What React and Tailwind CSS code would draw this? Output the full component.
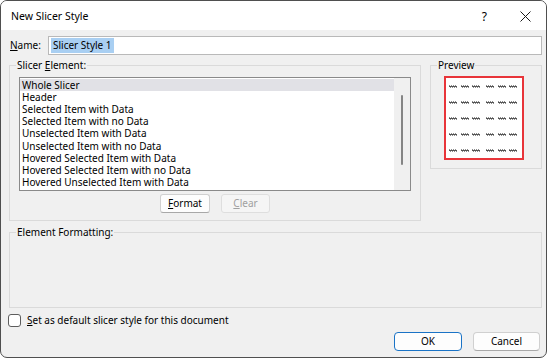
import React from "react";

const items = [
  "Whole Slicer",
  "Header",
  "Selected Item with Data",
  "Selected Item with no Data",
  "Unselected Item with Data",
  "Unselected Item with no Data",
  "Hovered Selected Item with Data",
  "Hovered Selected Item with no Data",
  "Hovered Unselected Item with Data",
];

const Dash = () => (
  <svg width="8" height="3" viewBox="0 0 8 3">
    <path d="M0 0.5 H1 M2 0.5 H3 M4 0.5 H5 M6 0.5 H7" stroke="#8c8c8c" strokeWidth="1" />
    <rect x="0" y="1" width="8" height="1" fill="#555555" />
    <path d="M1 2.5 H2 M3 2.5 H4 M5 2.5 H6 M7 2.5 H8" stroke="#8c8c8c" strokeWidth="1" />
  </svg>
);

const PreviewRow = () => (
  <div className="flex items-center h-[3px]">
    <Dash />
    <span className="w-[4px]" />
    <Dash />
    <span className="w-[3px]" />
    <Dash />
    <span className="w-[6px]" />
    <Dash />
    <span className="w-[4px]" />
    <Dash />
    <span className="w-[3px]" />
    <Dash />
  </div>
);

const App = () => {
  return (
    <div
      className="w-[550px] h-[360px] bg-white text-[10px] text-black"
      style={{ fontFamily: '"Noto Sans", "Liberation Sans", sans-serif' }}
    >
      <div className="w-[547px] h-[358px] border border-[#4f4f4f] rounded-[7px] overflow-hidden bg-[#f0f0f0] flex flex-col">
        {/* Title bar */}
        <div className="h-[29px] bg-white flex items-center pl-[10px] shrink-0">
          <span className="text-[10.5px] pt-[2px]">New Slicer Style</span>
          <span className="ml-auto text-[12px] pt-[2px] mr-[33px]">?</span>
          <svg width="11" height="11" viewBox="0 0 11 11" className="mr-[15px] mt-[2px]">
            <path d="M0.5 0.5 L10.5 10.5 M10.5 0.5 L0.5 10.5" stroke="#1a1a1a" strokeWidth="1" />
          </svg>
        </div>

        {/* Body */}
        <div className="flex-1 pl-[8px] pr-[4px] flex flex-col">
          {/* Name row */}
          <div className="flex items-center mt-[6px] h-[19px]">
            <span className="w-[39px] pl-[1px]">
              <span className="underline">N</span>ame:
            </span>
            <div className="flex-1 h-[19px] bg-white border border-[#b9b9b9] flex items-center pl-[2px]">
              <span className="bg-[#a9cff2] px-[2px] leading-[15px]">Slicer Style 1</span>
            </div>
          </div>

          {/* Slicer element + preview */}
          <div className="flex mt-[3px]">
            <fieldset className="w-[412px] h-[163px] border border-[#dadada]">
              <legend className="ml-[6px] px-[1px] leading-[14px]">
                Slicer <span className="underline">E</span>lement:
              </legend>
              <div className="px-[9px]">
                <div className="mt-[5px] h-[114px] w-[392px] bg-white border border-[#8a8a8a] flex">
                  <div className="flex-1 pt-[1px]">
                    {items.map((it, i) => (
                      <div
                        key={it}
                        className={`h-[12.2px] pl-[2px] whitespace-nowrap flex items-center ${
                          i === 0 ? "bg-[#e1e1e6]" : ""
                        }`}
                      >
                        <span className="leading-[11px]">{it}</span>
                      </div>
                    ))}
                  </div>
                  <div className="w-[16px] bg-[#f0f0f0] flex justify-center pt-[17px]">
                    <div className="w-[2px] h-[70px] bg-[#858585] rounded-full" />
                  </div>
                </div>
                <div className="flex justify-center gap-[11px] mt-[3px]">
                  <button className="w-[50px] h-[19px] bg-[#fdfdfd] border border-[#d0d0d0] border-b-[#a8a8a8] rounded-[3px] leading-[17px]">
                    <span className="underline">F</span>ormat
                  </button>
                  <button className="w-[49px] h-[19px] bg-[#f5f5f5] border border-[#dedede] rounded-[3px] leading-[17px] text-[#a0a0a0]">
                    <span className="underline">C</span>lear
                  </button>
                </div>
              </div>
            </fieldset>

            <fieldset className="ml-[9px] w-[112px] h-[111px] border border-[#dadada]">
              <legend className="ml-[6px] px-[1px] leading-[14px]">Preview</legend>
              <div className="pl-[13px]">
                <div className="mt-[4px] w-[80px] h-[84px] bg-white border-2 border-[#e8353a] pt-[7px] pl-[3px] flex flex-col gap-[13px]">
                  <PreviewRow />
                  <PreviewRow />
                  <PreviewRow />
                  <PreviewRow />
                  <PreviewRow />
                </div>
              </div>
            </fieldset>
          </div>

          {/* Element formatting */}
          <fieldset className="mt-[4px] w-[533px] h-[83px] border border-[#dadada]">
            <legend className="ml-[6px] px-[1px] leading-[14px]">Element Formatting:</legend>
          </fieldset>

          {/* Checkbox */}
          <div className="flex items-center mt-[5px] -ml-px">
            <span className="w-[13px] h-[13px] bg-white border border-[#5d5d5d] rounded-[3px]" />
            <span className="ml-[6px]">
              <span className="underline">S</span>et as default slicer style for this document
            </span>
          </div>

          {/* Buttons */}
          <div className="flex justify-end gap-[11px] mt-[4px] mr-[2px]">
            <button className="w-[68px] h-[19px] bg-[#fdfdfd] border border-[#1a73c6] rounded-[4px] leading-[17px]">
              OK
            </button>
            <button className="w-[67px] h-[19px] bg-[#fdfdfd] border border-[#d0d0d0] border-b-[#a8a8a8] rounded-[4px] leading-[17px]">
              Cancel
            </button>
          </div>
        </div>
      </div>
    </div>
  );
};

export default App;
